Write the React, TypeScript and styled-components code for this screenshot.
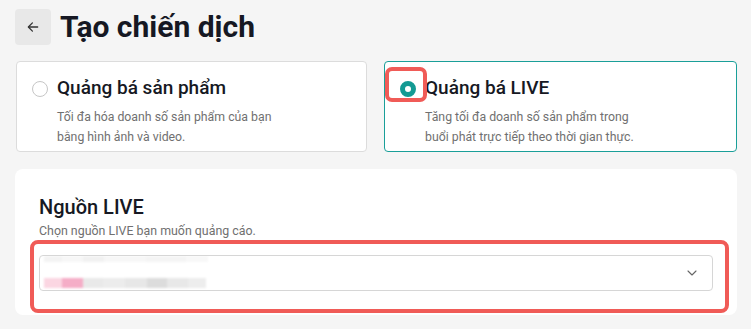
import React from "react";
import styled, { createGlobalStyle } from "styled-components";

const Global = createGlobalStyle`
  html, body { margin: 0; padding: 0; background: #f5f5f5; }
  body { font-family: Roboto, "Liberation Sans", Arial, sans-serif; color: #161823; }
  * { box-sizing: border-box; }
`;

const Page = styled.div`
  width: 751px;
  height: 329px;
  overflow: hidden;
  padding: 9px 14px 0 15px;
  display: flex;
  flex-direction: column;
`;

const Header = styled.div`
  display: flex;
  align-items: center;
  gap: 9px;
  height: 36px;
`;

const BackButton = styled.button`
  width: 36px;
  height: 36px;
  border: none;
  border-radius: 4px;
  background: #e8e8e8;
  display: flex;
  align-items: center;
  justify-content: center;
  padding: 0;
  color: #333;
`;

const Title = styled.h1`
  margin: 0;
  font-family: Roboto, "Liberation Sans", sans-serif;
  font-weight: 700;
  font-size: 30px;
  line-height: 36px;
  color: #161823;
`;

const Cards = styled.div`
  margin-top: 16px;
  margin-left: 1px;
  display: grid;
  grid-template-columns: 351px 353px;
  gap: 17px;
`;

const Card = styled.div<{ $selected?: boolean }>`
  position: relative;
  height: 91px;
  background: #fff;
  border: 1px solid ${(p) => (p.$selected ? "#1a9f99" : "#dcdcdc")};
  border-radius: 4px;
  padding: 14px 16px 0 15px;
  display: grid;
  grid-template-columns: 16px 1fr;
  column-gap: 9px;
  row-gap: 2px;
`;

const Radio = styled.span<{ $checked?: boolean }>`
  width: 16px;
  height: 16px;
  margin-top: 5px;
  border-radius: 50%;
  border: ${(p) => (p.$checked ? "5px solid #139a93" : "1px solid #c6c6c6")};
  background: #fff;
`;

const CardTitle = styled.div`
  font-family: Roboto, "Liberation Sans", sans-serif;
  font-size: 19px;
  font-weight: 500;
  line-height: 24px;
  color: #161823;
`;

const CardDesc = styled.div`
  grid-column: 2;
  font-family: Roboto, "Liberation Sans", sans-serif;
  font-size: 12.3px;
  line-height: 20px;
  color: #707070;
  width: 225px;
`;

const Highlight = styled.div`
  position: absolute;
  border: 4px solid #f05b57;
  border-radius: 7px;
  pointer-events: none;
`;

const RadioHighlight = styled(Highlight)`
  left: 0px;
  top: 5px;
  width: 42px;
  height: 35px;
`;

const Panel = styled.div`
  margin-top: 17px;
  background: #fff;
  border-radius: 8px;
  padding: 25px 24px 24px 24px;
  display: flex;
  flex-direction: column;
`;

const PanelTitle = styled.div`
  font-family: Roboto, "Liberation Sans", sans-serif;
  font-size: 20px;
  font-weight: 500;
  line-height: 26px;
  color: #161823;
`;

const PanelSub = styled.div`
  font-family: Roboto, "Liberation Sans", sans-serif;
  font-size: 12.4px;
  line-height: 18px;
  color: #707070;
  margin-top: 2px;
`;

const SelectWrap = styled.div`
  position: relative;
  margin-top: 15px;
`;

const SelectBox = styled.div`
  height: 36px;
  border: 1px solid #d6d6d6;
  border-radius: 4px;
  background: #fff;
  display: flex;
  align-items: center;
  justify-content: space-between;
  padding: 0 14px 0 4px;
  position: relative;
  overflow: hidden;
`;

const Blurred = styled.div`
  display: flex;
  flex-direction: column;
  justify-content: space-between;
  height: 34px;
  padding: 0 0 2px 0;
  filter: blur(1px);
`;

const BlurRow = styled.div`
  display: flex;
  height: 10px;
`;

const BlurBlock = styled.span<{ $c: string; $w: number }>`
  display: block;
  width: ${(p) => p.$w}px;
  height: 100%;
  background: ${(p) => p.$c};
`;

const SelectHighlight = styled(Highlight)`
  left: -9px;
  top: -15px;
  right: -16px;
  bottom: -22px;
  border-radius: 8px;
`;

const topRow: [string, number][] = [
  ["#f3f3f3", 18],
  ["#f7f7f7", 21],
  ["#f1f1f1", 21],
  ["#f7f7f7", 42],
  ["#f4f4f4", 40],
  ["#f8f8f8", 22],
];
const bottomRow: [string, number][] = [
  ["#fbd6e2", 18],
  ["#f5adc7", 21],
  ["#e9e9e9", 20],
  ["#ececec", 22],
  ["#e7e7e7", 22],
  ["#dcdcdc", 20],
  ["#e8e8e8", 21],
  ["#ededed", 18],
];

export default function App() {
  return (
    <>
      <Global />
      <Page>
        <Header>
          <BackButton aria-label="back">
            <svg width="14" height="14" viewBox="0 0 24 24" fill="none" stroke="#333" strokeWidth="2.2" strokeLinecap="round" strokeLinejoin="round">
              <path d="M20 12H5" />
              <path d="M11 5l-7 7 7 7" />
            </svg>
          </BackButton>
          <Title>Tạo chiến dịch</Title>
        </Header>
        <Cards>
          <Card>
            <Radio />
            <CardTitle>Quảng bá sản phẩm</CardTitle>
            <CardDesc>Tối đa hóa doanh số sản phẩm của bạn bằng hình ảnh và video.</CardDesc>
          </Card>
          <Card $selected>
            <Radio $checked />
            <CardTitle>Quảng bá LIVE</CardTitle>
            <CardDesc>Tăng tối đa doanh số sản phẩm trong buổi phát trực tiếp theo thời gian thực.</CardDesc>
            <RadioHighlight />
          </Card>
        </Cards>
        <Panel>
          <PanelTitle>Nguồn LIVE</PanelTitle>
          <PanelSub>Chọn nguồn LIVE bạn muốn quảng cáo.</PanelSub>
          <SelectWrap>
            <SelectBox>
              <Blurred>
                <BlurRow style={{ height: 6 }}>
                  {topRow.map(([c, w], i) => (
                    <BlurBlock key={i} $c={c} $w={w} />
                  ))}
                </BlurRow>
                <BlurRow>
                  {bottomRow.map(([c, w], i) => (
                    <BlurBlock key={i} $c={c} $w={w} />
                  ))}
                </BlurRow>
              </Blurred>
              <svg width="12" height="12" viewBox="0 0 24 24" fill="none" stroke="#666" strokeWidth="2.2" strokeLinecap="round" strokeLinejoin="round">
                <path d="M4 8l8 8 8-8" />
              </svg>
            </SelectBox>
            <SelectHighlight />
          </SelectWrap>
        </Panel>
      </Page>
    </>
  );
}
